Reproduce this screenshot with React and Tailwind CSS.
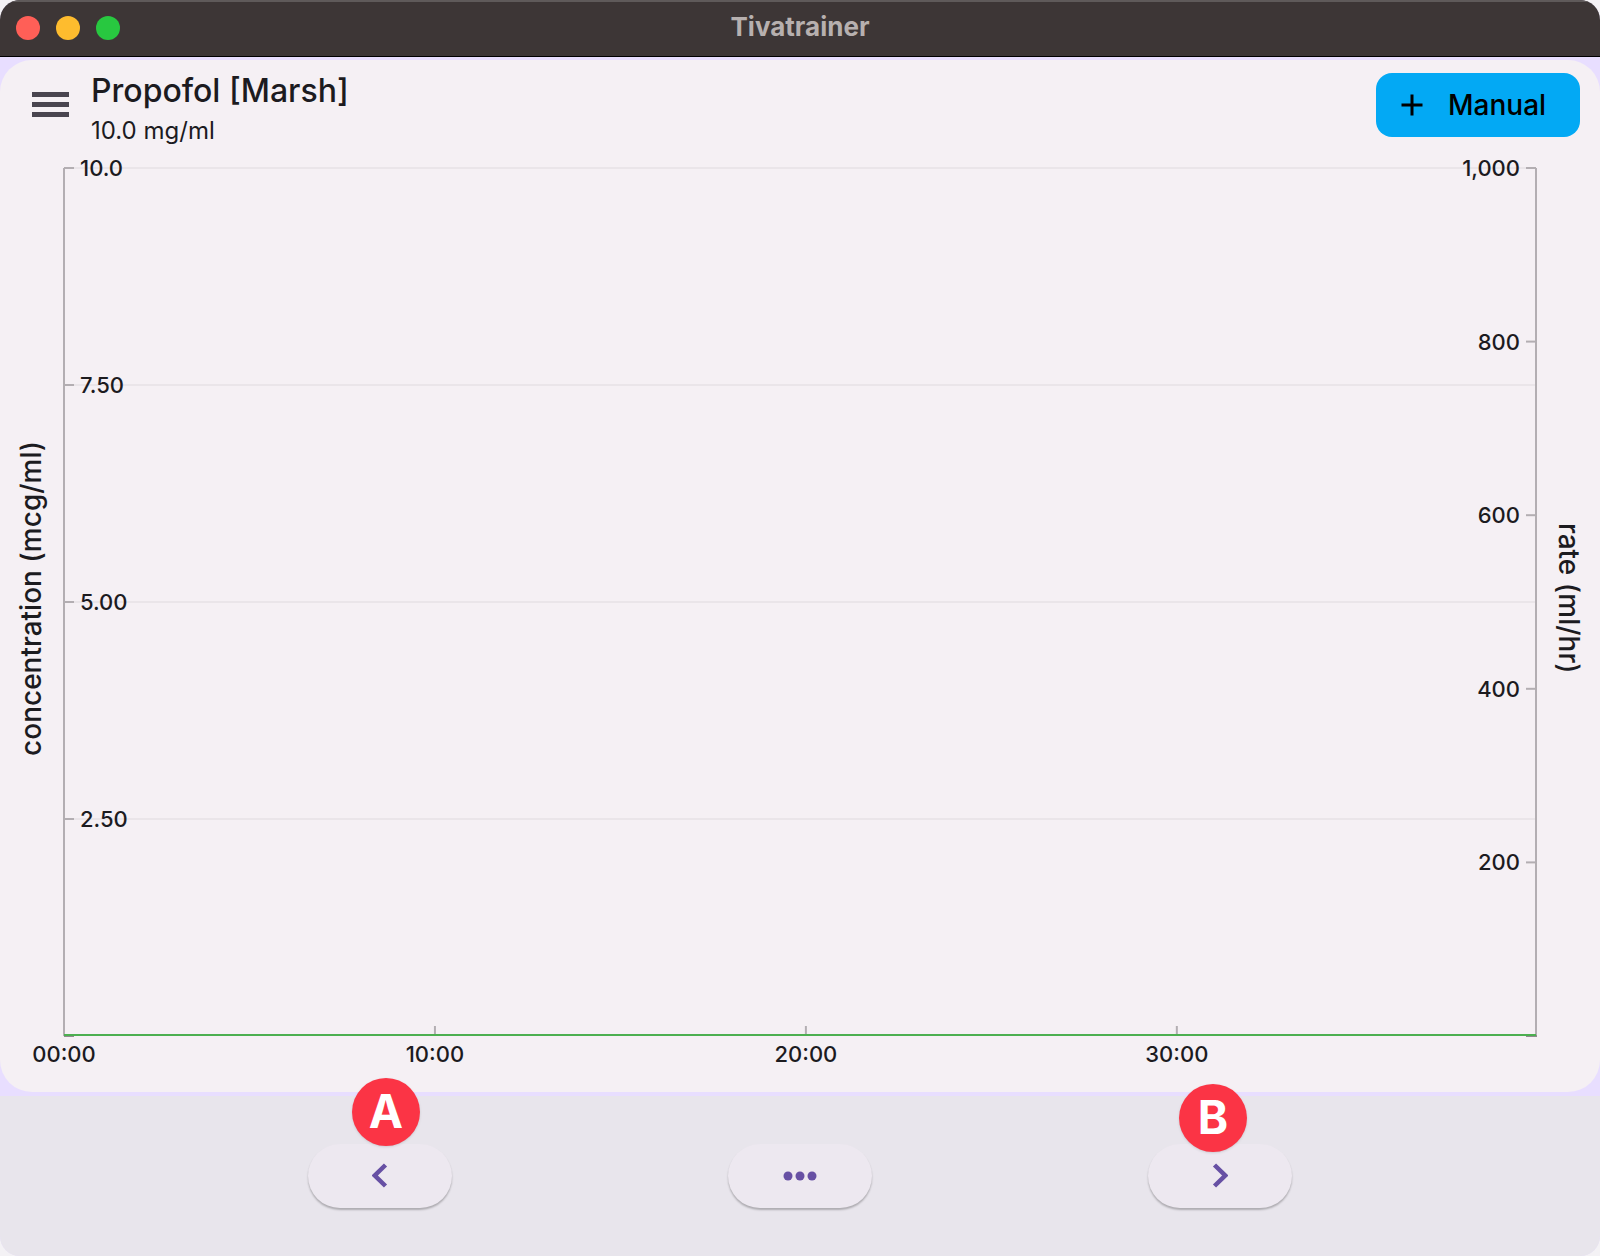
import { MdAdd } from 'react-icons/md';

const concentrationTicks = [
  { label: '10.0', y: '0%' },
  { label: '7.50', y: '25%' },
  { label: '5.00', y: '50%' },
  { label: '2.50', y: '75%' },
];

const rateTicks = [
  { label: '1,000', y: '0%' },
  { label: '800', y: '20%' },
  { label: '600', y: '40%' },
  { label: '400', y: '60%' },
  { label: '200', y: '80%' },
];

const timeTicks = [
  { label: '00:00', x: '0%' },
  { label: '10:00', x: '25.2%' },
  { label: '20:00', x: '50.4%' },
  { label: '30:00', x: '75.6%' },
];

function TitleBar() {
  return (
    <div className="relative flex h-[57px] justify-center border-t-2 border-b border-t-[#5f5a5a] border-b-black bg-[#3d3636] pt-[9px]">
      <div className="absolute top-3.5 left-4 flex gap-4">
        <button aria-label="Close" className="h-6 w-6 rounded-full bg-[#ff5f57]"></button>
        <button aria-label="Minimize" className="h-6 w-6 rounded-full bg-[#febc2e]"></button>
        <button aria-label="Zoom" className="h-6 w-6 rounded-full bg-[#28c840]"></button>
      </div>
      <span className="text-[26px] leading-8 font-bold text-[#b7b0af]">Tivatrainer</span>
    </div>
  );
}

function Header() {
  return (
    <header className="flex h-[108px] items-start justify-between pr-5 pl-8">
      <div className="flex items-start gap-[22px]">
        <button aria-label="Menu" className="pt-8 text-[#49454f]">
          <svg width="37" height="25" viewBox="0 0 37 25" fill="currentColor">
            <rect width="37" height="5" />
            <rect y="10" width="37" height="5" />
            <rect y="20" width="37" height="5" />
          </svg>
        </button>
        <div className="pt-[11px]">
          <h1 className="text-[32px] leading-10 font-medium">Propofol [Marsh]</h1>
          <p className="text-2xl leading-10">10.0 mg/ml</p>
        </div>
      </div>
      <button className="mt-[13px] flex h-16 w-[204px] items-center gap-[18px] rounded-2xl bg-[#03a9f4] pl-[18px] text-[28px] font-medium text-black">
        <MdAdd size={36} />
        Manual
      </button>
    </header>
  );
}

function Chart() {
  return (
    <svg className="min-h-96 w-full flex-1 overflow-visible text-[22px] font-medium" fill="#1c1b1f">
      {concentrationTicks.map((tick) => (
        <g key={tick.label}>
          <line x1="0" x2="100%" y1={tick.y} y2={tick.y} stroke="#eae5e9" strokeWidth="2" />
          <line x1="0" x2="10" y1={tick.y} y2={tick.y} stroke="#b3aeb2" strokeWidth="2" />
          <text x="16" y={tick.y} dy="8">{tick.label}</text>
        </g>
      ))}

      {rateTicks.map((tick) => (
        <svg key={tick.label} x="100%" y={tick.y} className="overflow-visible">
          <line x1="-10" x2="0" y1="0" y2="0" stroke="#b3aeb2" strokeWidth="2" />
          <text x="-16" y="0" dy="8" textAnchor="end">{tick.label}</text>
        </svg>
      ))}

      {/* Axes */}
      <line x1="0" x2="0" y1="0" y2="100%" stroke="#b3aeb2" strokeWidth="2" />
      <line x1="100%" x2="100%" y1="0" y2="100%" stroke="#b3aeb2" strokeWidth="2" />
      <line x1="0" x2="10" y1="100%" y2="100%" stroke="#8f8a8e" strokeWidth="2" />
      <svg x="100%" y="100%" className="overflow-visible">
        <line x1="-10" x2="1" y1="0" y2="0" stroke="#8f8a8e" strokeWidth="2" />
      </svg>

      {timeTicks.map((tick) => (
        <svg key={tick.label} x={tick.x} y="100%" className="overflow-visible">
          <line x1="0" x2="0" y1="-10" y2="-1" stroke="#b3aeb2" strokeWidth="2" />
          <text x="0" y="26" textAnchor="middle">{tick.label}</text>
        </svg>
      ))}

      {/* Rate is zero for the whole run */}
      <svg y="100%" width="100%" className="overflow-visible">
        <line x1="0" x2="100%" y1="-1" y2="-1" stroke="#4caf50" strokeWidth="2" />
      </svg>
    </svg>
  );
}

function Marker({ className, children }) {
  return (
    <span
      className={`pointer-events-none absolute flex h-[68px] w-[68px] items-center justify-center rounded-full bg-[#fb3445] pb-0.5 text-[46px] leading-none font-bold text-white shadow-sm ${className}`}
    >
      {children}
    </span>
  );
}

function PillButton({ label, children }) {
  return (
    <button
      aria-label={label}
      className="flex h-16 w-36 items-center justify-center rounded-full bg-[#ede8f0] text-[#6750a4] shadow-[0_2px_2px_rgba(0,0,0,0.25)]"
    >
      {children}
    </button>
  );
}

function Chevron({ d }) {
  return (
    <svg width="16" height="26" viewBox="0 0 16 26" fill="none" stroke="currentColor" strokeWidth="4.5">
      <path d={d} />
    </svg>
  );
}

export default function App() {
  return (
    <div className="min-h-screen bg-[#f4f2f5]">
      <div className="flex min-h-screen flex-col overflow-hidden rounded-[20px] bg-[#e8deff] font-['Inter',sans-serif] text-[#1c1b1f]">
        <TitleBar />

        <main className="mt-[3px] mb-1 flex flex-1 flex-col rounded-[32px] bg-[#f5f0f4] pb-14">
          <Header />
          <div className="flex flex-1">
            <div className="flex w-16 items-center justify-center pr-0.5 pb-2">
              <span className="rotate-180 text-[28px] leading-8 font-medium [writing-mode:vertical-rl]">
                concentration (mcg/ml)
              </span>
            </div>
            <div className="flex flex-1 flex-col">
              <Chart />
            </div>
            <div className="flex w-16 items-center justify-center pb-2 pl-0.5">
              <span className="text-[28px] leading-8 font-medium [writing-mode:vertical-rl]">rate (ml/hr)</span>
            </div>
          </div>
        </main>

        <footer className="flex justify-evenly bg-[#e8e5ec] px-8 py-12">
          <div className="relative">
            <PillButton label="Previous">
              <Chevron d="M13.5 2 2.8 12.5 13.5 23" />
            </PillButton>
            <Marker className="-top-[66px] left-11">A</Marker>
          </div>
          <PillButton label="More">
            <svg width="34" height="10" viewBox="0 0 34 10" fill="currentColor">
              <circle cx="5" cy="5" r="4.5" />
              <circle cx="17" cy="5" r="4.5" />
              <circle cx="29" cy="5" r="4.5" />
            </svg>
          </PillButton>
          <div className="relative">
            <PillButton label="Next">
              <Chevron d="M2.5 2 13.2 12.5 2.5 23" />
            </PillButton>
            <Marker className="-top-[60px] left-[31px]">B</Marker>
          </div>
        </footer>
      </div>
    </div>
  );
}
